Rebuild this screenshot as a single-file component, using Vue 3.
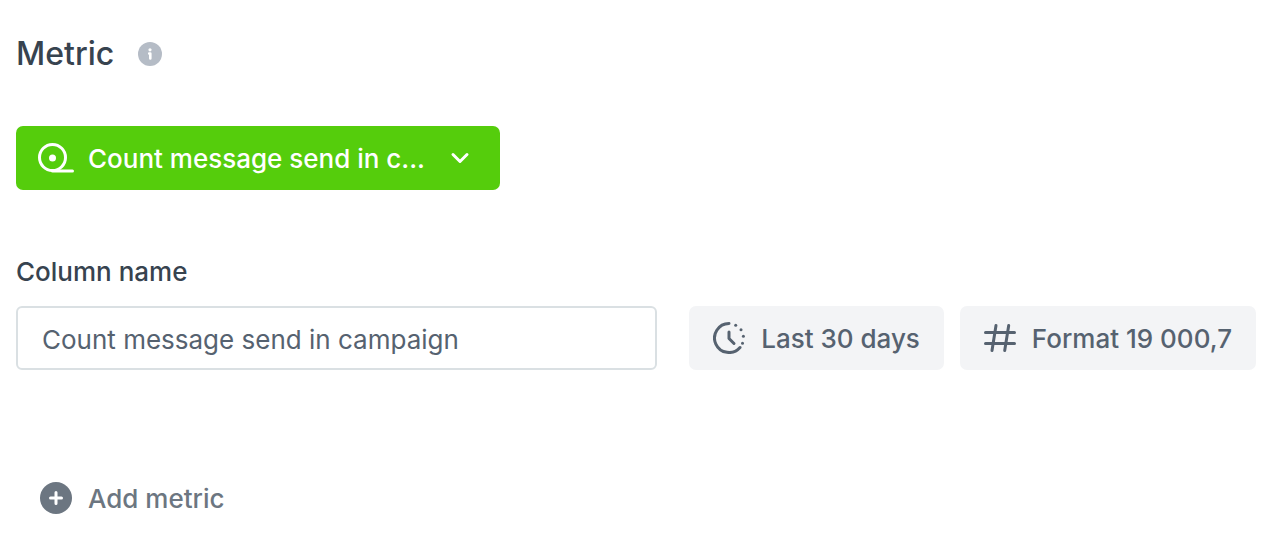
<script setup>
import { ref } from 'vue'

const columnName = ref('Count message send in campaign')
</script>

<template>
  <main class="panel">
    <header class="heading">
      <h1>Metric</h1>
      <button class="info" type="button" aria-label="About metrics">
        <svg width="24" height="24" viewBox="0 0 24 24" aria-hidden="true">
          <circle cx="12" cy="12" r="12" fill="#b5bcc6" />
          <circle cx="12" cy="7.8" r="1.6" fill="#fff" />
          <path d="M11.2 11.5H12.3v5" fill="none" stroke="#fff" stroke-width="2.6" stroke-linecap="round" stroke-linejoin="round" />
        </svg>
      </button>
    </header>

    <button class="metric" type="button" aria-haspopup="listbox">
      <svg width="36" height="32" viewBox="0 0 36 32" fill="none" stroke="#fff" stroke-width="3" stroke-linecap="round" aria-hidden="true">
        <circle cx="14.5" cy="15.5" r="13" />
        <circle cx="14.5" cy="16" r="3.5" fill="#fff" stroke="none" />
        <path d="M14.5 29H34.5" />
      </svg>
      <span class="metric-text">Count message send in c...</span>
      <svg width="24" height="24" viewBox="0 0 24 24" fill="none" stroke="#fff" stroke-width="3" stroke-linecap="round" stroke-linejoin="round" aria-hidden="true">
        <path d="M5 8.5L12 15.5L19 8.5" />
      </svg>
    </button>

    <div class="fields">
      <div class="column">
        <label for="column-name">Column name</label>
        <input id="column-name" v-model="columnName" type="text" />
      </div>
      <div class="options">
        <button class="option" type="button">
          <svg width="32" height="32" viewBox="0 0 32 32" fill="none" stroke="#566270" stroke-width="3" stroke-linecap="round" stroke-linejoin="round" aria-hidden="true">
            <path d="M16 1.5A14.5 14.5 0 1 0 27 25.5" />
            <path d="M16 10v6.5l5 5" />
            <g fill="#566270" stroke="none">
              <circle cx="22.7" cy="3.2" r="1.5" />
              <circle cx="28" cy="7.7" r="1.5" />
              <circle cx="30.4" cy="14.2" r="1.5" />
              <circle cx="29.5" cy="21.3" r="1.5" />
            </g>
          </svg>
          <span>Last 30 days</span>
        </button>
        <button class="option" type="button">
          <svg width="32" height="32" viewBox="0 0 32 32" fill="none" stroke="#566270" stroke-width="3" stroke-linecap="round" aria-hidden="true">
            <path d="M1.5 10.5h29M1.5 21.5h29M12 3.5L8 28.5M24.7 3.5L20.7 28.5" />
          </svg>
          <span>Format 19 000,7</span>
        </button>
      </div>
    </div>

    <button class="add" type="button">
      <svg width="32" height="32" viewBox="0 0 32 32" aria-hidden="true">
        <circle cx="16" cy="16" r="16" fill="#6c7681" />
        <path d="M16 10.5v11M10.5 16h11" stroke="#fff" stroke-width="3" stroke-linecap="round" />
      </svg>
      <span>Add metric</span>
    </button>
  </main>
</template>

<style>
body {
  margin: 0;
  background: #fff;
}
</style>

<style scoped>
.panel {
  display: flex;
  flex-direction: column;
  align-items: flex-start;
  padding: 32px 8px 16px 16px;
  font-family: Inter, "Liberation Sans", sans-serif;
  font-size: 26px;
  line-height: 32px;
  color: #37434f;
}

button,
input {
  box-sizing: border-box;
  margin: 0;
  font: inherit;
}

button {
  display: flex;
  align-items: center;
  padding: 0;
  border: 0;
  background: none;
  font-weight: 500;
  white-space: nowrap;
  cursor: pointer;
}

button span {
  padding-top: 2px;
}

svg {
  display: block;
  flex: none;
}

.heading {
  display: flex;
  align-items: center;
  gap: 24px;
}

h1 {
  margin: 0;
  font-size: 32px;
  font-weight: 500;
  line-height: 44px;
}

.metric {
  gap: 14px;
  width: 484px;
  max-width: 100%;
  height: 64px;
  margin-top: 50px;
  padding: 0 28px 0 22px;
  border-radius: 7px;
  background: #55cd0c;
  color: #fff;
}

.metric-text {
  flex: 1;
  text-align: left;
}

.fields {
  display: flex;
  align-items: flex-end;
  gap: 32px;
  width: 100%;
  margin-top: 66px;
}

.column {
  display: flex;
  flex: 1;
  flex-direction: column;
  gap: 18px;
  min-width: 0;
}

label {
  font-weight: 500;
}

input {
  width: 100%;
  height: 64px;
  padding: 2px 24px 0;
  border: 2px solid #dae0e3;
  border-radius: 6px;
  background: #fff;
  color: #566270;
}

.options {
  display: flex;
  gap: 16px;
}

.option {
  gap: 16px;
  height: 64px;
  padding: 0 24px;
  border-radius: 7px;
  background: #f3f4f6;
  color: #566270;
}

.add {
  gap: 16px;
  margin-top: 111px;
  margin-left: 24px;
  color: #6c7681;
}
</style>
